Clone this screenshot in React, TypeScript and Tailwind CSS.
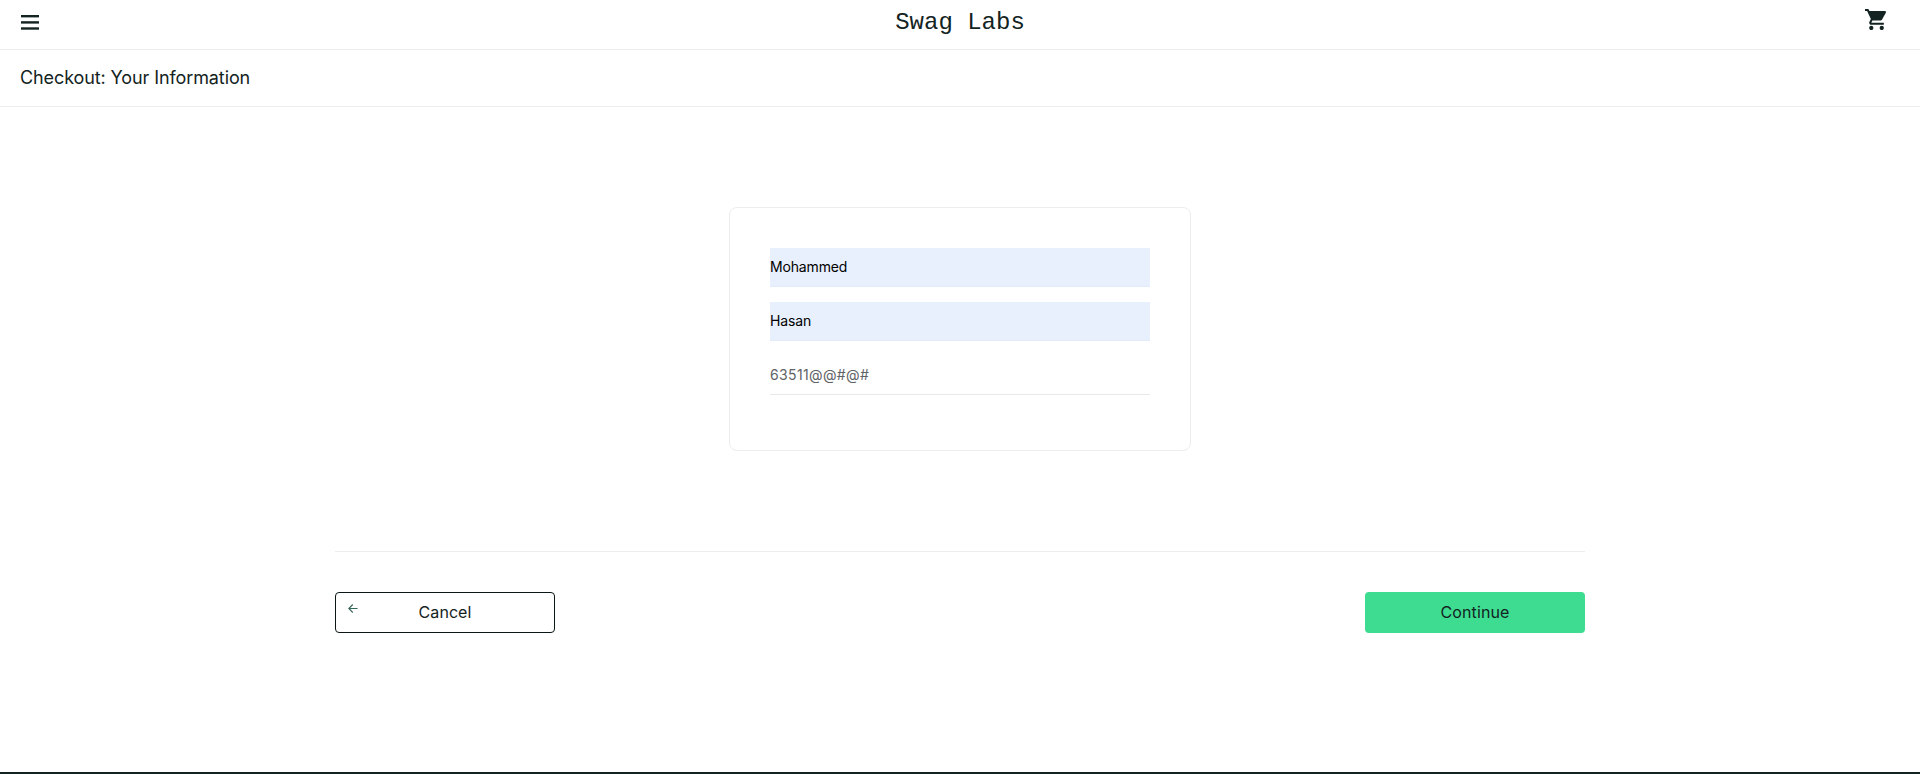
function Field({ value, filled }: { value: string; filled?: boolean }) {
  return (
    <input
      type="text"
      defaultValue={value}
      className={
        filled
          ? "h-[39px] w-full rounded-none border-b border-[#e4ebf8] bg-[#e8f0fe] p-0 pb-px text-[14px] tracking-[-0.15px] text-black outline-none"
          : "h-[39px] w-full rounded-none border-b border-[#e8e8e8] bg-white p-0 pb-px text-[14px] tracking-[0.36px] text-[#606266] outline-none"
      }
    />
  );
}

export default function App() {
  return (
    <div className="flex h-[774px] flex-col overflow-hidden bg-white font-['Inter','Open_Sans',sans-serif] text-[#132322]">
      <header className="grid h-[50px] shrink-0 grid-cols-3 border-b border-[#ededed]">
        <button aria-label="Open menu" className="ml-[21px] mt-[15px] h-[15px] w-[18px]">
          <svg width="18" height="15" viewBox="0 0 18 15" fill="#132322" className="block">
            <rect y="0" width="18" height="2.4" />
            <rect y="6.2" width="18" height="2.4" />
            <rect y="12.3" width="18" height="2.4" />
          </svg>
        </button>
        <div className="pt-[7px] text-center font-['Liberation_Mono',monospace] text-[24px] leading-8">Swag Labs</div>
        <a aria-label="Cart" className="mr-[33px] mt-[9px] justify-self-end">
          <svg width="22" height="21" viewBox="1 2 21 20" preserveAspectRatio="none" fill="#132322" className="block">
            <path d="M7 18c-1.1 0-1.99.9-1.99 2S5.9 22 7 22s2-.9 2-2-.9-2-2-2zM1 2v2h2l3.6 7.59-1.35 2.45c-.16.28-.25.61-.25.96 0 1.1.9 2 2 2h12v-2H7.42c-.14 0-.25-.11-.25-.25l.03-.12.9-1.63h7.45c.75 0 1.41-.41 1.75-1.03l3.58-6.49c.08-.14.12-.31.12-.48 0-.55-.45-1-1-1H5.21l-.94-2H1zm16 16c-1.1 0-1.99.9-1.99 2s.89 2 1.99 2 2-.9 2-2-.9-2-2-2z" />
          </svg>
        </a>
      </header>

      <div className="flex h-[57px] shrink-0 items-center border-b border-[#ededed] px-5 pb-px">
        <h1 className="text-[18px] font-normal tracking-[-0.1px]">Checkout: Your Information</h1>
      </div>

      <main className="flex grow flex-col items-center pt-[100px]">
        <form className="flex h-[244px] w-[462px] shrink-0 flex-col gap-[15px] rounded-[8px] border border-[#ededed] p-10">
          <Field value="Mohammed" filled />
          <Field value="Hasan" filled />
          <Field value="63511@@#@#" />
        </form>

        <div className="mt-[100px] flex w-[1250px] justify-between border-t border-[#ededed] pt-10">
          <button className="relative h-[41px] w-[220px] rounded-[4px] border border-[#0b1716] pb-px text-[16px] font-normal tracking-[0.05px]">
            <svg width="10" height="9" viewBox="0 0 10 9" fill="none" stroke="#35685b" strokeWidth="1.1" className="absolute left-[12px] top-[11px]">
              <path d="M9.5 4.5H1M4.8.5.8 4.5l4 4" />
            </svg>
            Cancel
          </button>
          <button className="h-[41px] w-[220px] rounded-[4px] bg-[#3ddc91] pb-px text-[16px] font-normal tracking-[0.1px]">
            Continue
          </button>
        </div>
      </main>

      <footer className="h-[2px] shrink-0 bg-[#132322]" />
    </div>
  );
}
